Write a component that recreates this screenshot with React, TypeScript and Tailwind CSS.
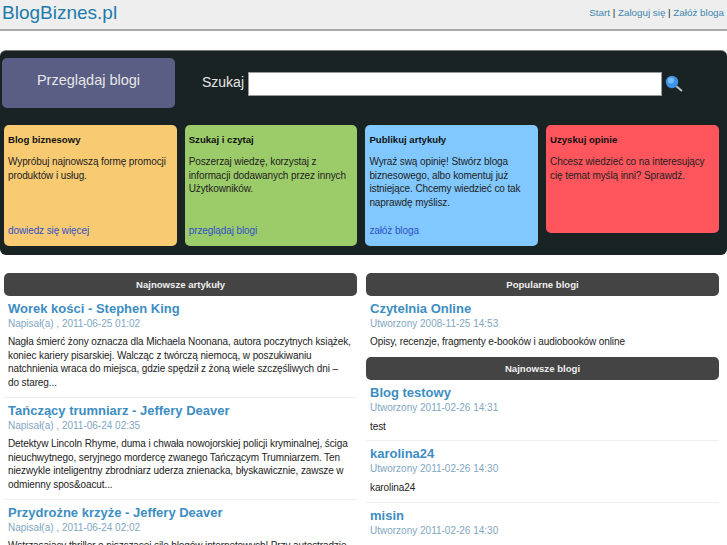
// BlogBiznes.pl — strona główna
const font = "font-['Liberation_Sans',Arial,sans-serif]";

const cards = [
  { title: "Blog biznesowy", body: "Wypróbuj najnowszą formę promocji produktów i usług.", link: "dowiedz się więcej", color: "bg-[#f8cb73]", h: "h-[121px]" },
  { title: "Szukaj i czytaj", body: "Poszerzaj wiedzę, korzystaj z informacji dodawanych przez innych Użytkowników.", link: "przeglądaj blogi", color: "bg-[#9ccc69]", h: "h-[121px]" },
  { title: "Publikuj artykuły", body: "Wyraź swą opinię! Stwórz bloga biznesowego, albo komentuj już istniejące. Chcemy wiedzieć co tak naprawdę myślisz.", link: "załóż bloga", color: "bg-[#80c8ff]", h: "h-[121px]" },
  { title: "Uzyskuj opinie", body: "Chcesz wiedzieć co na interesujący cię temat myślą inni? Sprawdź.", link: "", color: "bg-[#ff555c]", h: "h-[108px]" },
];

const articles = [
  { title: "Worek kości - Stephen King", date: "Napisał(a) , 2011-06-25 01:02", body: "Nagła śmierć żony oznacza dla Michaela Noonana, autora poczytnych książek, koniec kariery pisarskiej. Walcząc z twórczą niemocą, w poszukiwaniu natchnienia wraca do miejsca, gdzie spędził z żoną wiele szczęśliwych dni – do stareg..." },
  { title: "Tańczący trumniarz - Jeffery Deaver", date: "Napisał(a) , 2011-06-24 02:35", body: "Detektyw Lincoln Rhyme, duma i chwała nowojorskiej policji kryminalnej, ściga nieuchwytnego, seryjnego mordercę zwanego Tańczącym Trumniarzem. Ten niezwykle inteligentny zbrodniarz uderza znienacka, błyskawicznie, zawsze w odmienny spos&oacut..." },
  { title: "Przydrożne krzyże - Jeffery Deaver", date: "Napisał(a) , 2011-06-24 02:02", body: "Wstrząsający thriller o niszczącej sile blogów internetowych! Przy autostradzie" },
];

const newest = [
  { title: "Blog testowy", date: "Utworzony 2011-02-26 14:31", body: "test" },
  { title: "karolina24", date: "Utworzony 2011-02-26 14:30", body: "karolina24" },
  { title: "misin", date: "Utworzony 2011-02-26 14:30", body: "misin" },
];

function PanelHead({ children }: { children: string }) {
  return <div className="h-[23px] rounded-[5px] bg-[#444444] text-center text-[9.6px] font-bold leading-[23px] text-[#eeeeee]">{children}</div>;
}

function Entry({ title, date, body, last, roomy }: { title: string; date: string; body: string; last?: boolean; roomy?: boolean }) {
  return (
    <div className={`px-1 pt-[5px] ${last ? "" : "border-b border-[#eeeeee] pb-[7px]"}`}>
      <a className="block text-[13px] font-bold leading-[16px] text-[#3d8dc2]">{title}</a>
      <div className="text-[10px] leading-[14px] text-[#7fa6c2]">{date}</div>
      <p className={`mr-[2px] text-[10px] leading-[13.7px] tracking-[-0.1px] text-[#222222] ${roomy ? "mt-[5px]" : "mt-[4px]"}`}>{body}</p>
    </div>
  );
}

export default function App() {
  return (
    <div className={`h-[545px] w-[727px] overflow-hidden bg-white ${font}`}>
      <header className="flex h-[31px] items-start justify-between border-b-2 border-[#aaaaaa] bg-[#eeeeee] pl-[2px] pr-[3px]">
        <a className="pt-[1px] text-[19px] leading-[24px] text-[#1c7cac]">BlogBiznes.pl</a>
        <nav className="pt-[7px] text-[9.8px] leading-[12px] text-[#222222]">
          <a className="text-[#3d87ad]">Start</a> | <a className="text-[#3d87ad]">Zaloguj się</a> | <a className="text-[#3d87ad]">Załóż bloga</a>
        </nav>
      </header>

      <section className="mt-[19px] h-[205px] rounded-[6px] border-t border-[#777777] bg-[#192324] pt-[7px]">
        <div className="flex items-start">
          <a className="ml-[2px] h-[50px] w-[173px] rounded-[5px] bg-[#5a5e85] pt-[13px] text-center text-[14.5px] leading-[18px] text-[#e6e6e6]">Przeglądaj blogi</a>
          <div className="ml-[27px] mt-[14px] flex items-center">
            <span className="mr-[4px] pb-[3px] text-[14px] text-[#e6e6e6]">Szukaj</span>
            <input className="h-[24px] w-[414px] border border-[#999999] bg-white" />
            <svg className="ml-[3px]" width="18" height="18" viewBox="0 0 18 18">
              <line x1="11" y1="11" x2="17" y2="16" stroke="#b8c4c8" strokeWidth="2" />
              <circle cx="7" cy="7" r="6.2" fill="#3d93ea" />
              <circle cx="6" cy="5.5" r="3" fill="#78bdf5" />
            </svg>
          </div>
        </div>
        <div className="mt-[17px] flex items-start gap-[8px] pl-[4px]">
          {cards.map((c) => (
            <div key={c.title} className={`flex w-[172.7px] flex-col rounded-[5px] px-[4px] pt-[8px] pb-[9px] text-[#222222] ${c.color} ${c.h}`}>
              <h3 className="text-[9.6px] font-bold leading-[14px] text-[#111111]">{c.title}</h3>
              <p className="mt-[8px] text-[10px] leading-[13.7px] tracking-[-0.1px]">{c.body}</p>
              {c.link && <a className="mt-auto text-[10px] leading-[13px] tracking-[-0.1px] text-[#2f50c8]">{c.link}</a>}
            </div>
          ))}
        </div>
      </section>

      <main className="mt-[18px] flex items-start gap-[9px] pl-[4px] pr-[8px]">
        <div className="w-[353px]">
          <PanelHead>Najnowsze artykuły</PanelHead>
          {articles.map((a, i) => <Entry key={a.title} {...a} last={i === articles.length - 1} />)}
        </div>
        <div className="w-[353px]">
          <PanelHead>Popularne blogi</PanelHead>
          <Entry title="Czytelnia Online" date="Utworzony 2008-11-25 14:53" body="Opisy, recenzje, fragmenty e-booków i audiobooków online" last />
          <div className="mt-[8px]"><PanelHead>Najnowsze blogi</PanelHead></div>
          {newest.map((b, i) => <Entry key={b.title} {...b} roomy last={i === newest.length - 1} />)}
        </div>
      </main>
    </div>
  );
}
